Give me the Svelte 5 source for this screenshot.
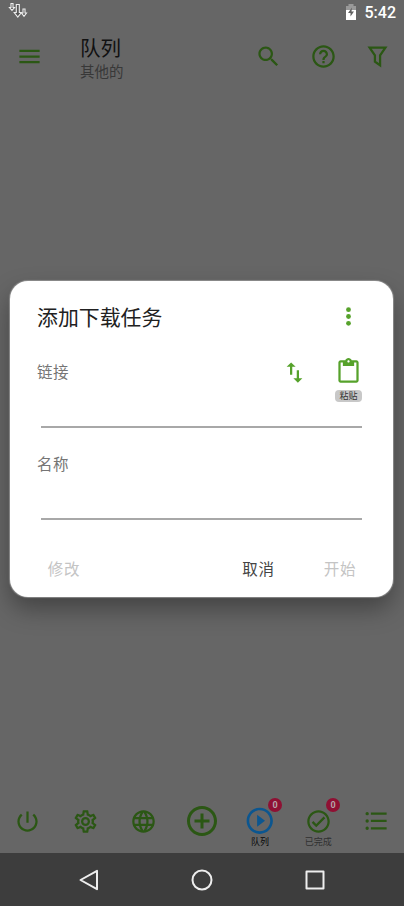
<script lang="ts">
	const cog =
		'M12,8A4,4 0 0,1 16,12A4,4 0 0,1 12,16A4,4 0 0,1 8,12A4,4 0 0,1 12,8M12,10A2,2 0 0,0 10,12A2,2 0 0,0 12,14A2,2 0 0,0 14,12A2,2 0 0,0 12,10M10,22C9.75,22 9.54,21.82 9.5,21.58L9.13,18.93C8.5,18.68 7.96,18.34 7.44,17.94L4.95,18.95C4.73,19.03 4.46,18.95 4.34,18.73L2.34,15.27C2.21,15.05 2.27,14.78 2.46,14.63L4.57,12.97L4.5,12L4.57,11L2.46,9.37C2.27,9.22 2.21,8.95 2.34,8.73L4.34,5.27C4.46,5.05 4.73,4.96 4.95,5.05L7.44,6.05C7.96,5.66 8.5,5.32 9.13,5.07L9.5,2.42C9.54,2.18 9.75,2 10,2H14C14.25,2 14.46,2.18 14.5,2.42L14.87,5.07C15.5,5.32 16.04,5.66 16.56,6.05L19.05,5.05C19.27,4.96 19.54,5.05 19.66,5.27L21.66,8.73C21.79,8.95 21.73,9.22 21.54,9.37L19.43,11L19.5,12L19.43,13L21.54,14.63C21.73,14.78 21.79,15.05 21.66,15.27L19.66,18.73C19.54,18.95 19.27,19.04 19.05,18.95L16.56,17.95C16.04,18.34 15.5,18.68 14.87,18.93L14.5,21.58C14.46,21.82 14.25,22 14,22H10M11.25,4L10.88,6.61C9.68,6.86 8.62,7.5 7.85,8.39L5.44,7.35L4.69,8.65L6.8,10.2C6.4,11.37 6.4,12.64 6.8,13.8L4.68,15.36L5.43,16.66L7.86,15.62C8.63,16.5 9.68,17.14 10.87,17.38L11.24,20H12.76L13.13,17.39C14.32,17.14 15.37,16.5 16.14,15.62L18.57,16.66L19.32,15.36L17.2,13.81C17.6,12.64 17.6,11.37 17.2,10.2L19.31,8.65L18.56,7.35L16.15,8.39C15.38,7.5 14.32,6.86 13.12,6.62L12.75,4H11.25Z'
	const power =
		'M13 3h-2v10h2V3zm4.83 2.17l-1.42 1.42C17.99 7.86 19 9.81 19 12c0 3.87-3.13 7-7 7s-7-3.13-7-7c0-2.19 1.01-4.14 2.58-5.42L6.17 5.17C4.23 6.82 3 9.26 3 12c0 4.97 4.03 9 9 9s9-4.03 9-9c0-2.74-1.23-5.18-3.17-6.83z'
	const globe =
		'M11.99 2C6.47 2 2 6.48 2 12s4.47 10 9.99 10C17.52 22 22 17.52 22 12S17.52 2 11.99 2zm6.93 6h-2.95c-.32-1.25-.78-2.45-1.38-3.56 1.84.63 3.37 1.91 4.33 3.56zM12 4.04c.83 1.2 1.48 2.53 1.91 3.96h-3.82c.43-1.43 1.08-2.76 1.91-3.96zM4.26 14C4.1 13.36 4 12.69 4 12s.1-1.36.26-2h3.38c-.08.66-.14 1.32-.14 2s.06 1.34.14 2H4.26zm.82 2h2.95c.32 1.25.78 2.45 1.38 3.56-1.84-.63-3.37-1.9-4.33-3.56zm2.95-8H5.08c.96-1.66 2.49-2.93 4.33-3.56C8.81 5.55 8.35 6.75 8.03 8zM12 19.96c-.83-1.2-1.48-2.53-1.91-3.96h3.82c-.43 1.43-1.08 2.76-1.91 3.96zM14.34 14H9.66c-.09-.66-.16-1.32-.16-2s.07-1.35.16-2h4.68c.09.65.16 1.32.16 2s-.07 1.34-.16 2zm.25 5.56c.6-1.11 1.06-2.31 1.38-3.56h2.95c-.96 1.65-2.49 2.93-4.33 3.56zM16.36 14c.08-.66.14-1.32.14-2s-.06-1.34-.14-2h3.38c.16.64.26 1.31.26 2s-.1 1.36-.26 2h-3.38z'

	const plus =
		'M13 7h-2v4H7v2h4v4h2v-4h4v-2h-4V7zm-1-5C6.48 2 2 6.48 2 12s4.48 10 10 10 10-4.48 10-10S17.52 2 12 2zm0 18c-4.41 0-8-3.59-8-8s3.59-8 8-8 8 3.59 8 8-3.59 8-8 8z'
	const play =
		'M10 16.5l6-4.5-6-4.5v9zM12 2C6.48 2 2 6.48 2 12s4.48 10 10 10 10-4.48 10-10S17.52 2 12 2zm0 18c-4.41 0-8-3.59-8-8s3.59-8 8-8 8 3.59 8 8-3.59 8-8 8z'
	const check =
		'M12 2C6.5 2 2 6.5 2 12S6.5 22 12 22 22 17.5 22 12 17.5 2 12 2M12 20C7.59 20 4 16.41 4 12S7.59 4 12 4 20 7.59 20 12 16.41 20 12 20M16.59 7.58L10 14.17L7.41 11.59L6 13L10 17L18 9L16.59 7.58Z'
	const list =
		'M2.2 5a1.5 1.5 0 1 0 3 0a1.5 1.5 0 1 0-3 0M7 4v2h14V4zM2.2 11.500a1.5 1.5 0 1 0 3 0a1.5 1.5 0 1 0-3 0M7 10.500v2h14v-2zM2.2 18a1.5 1.5 0 1 0 3 0a1.5 1.5 0 1 0-3 0M7 17v2h14v-2z'

	const tabs = [
		{ name: 'power', d: power, size: 27 },
		{ name: 'settings', d: cog, size: 27 },
		{ name: 'browser', d: globe, size: 27 },
		{ name: 'add', d: plus, size: 36 },
		{ name: 'queue', d: play, size: 31.5, label: '队列', badge: 0, active: true },
		{ name: 'done', d: check, size: 27, label: '已完成', badge: 0 },
		{ name: 'list', d: list, size: 27 }
	]

	let link = $state('')
	let fileName = $state('')
</script>

<div class="screen">
	<div class="statusbar">
		<svg class="downloads" width="20" height="18" viewBox="0 0 20 18">
			<path d="M3 1.5h2v4h1.5L4 8.3 1.5 5.5H3z" />
			<path d="M8.3 2.500h3v8h2.100L9.8 15.200 6.200 10.500h2.100z" />
			<path d="M15 7h2v4h1.500L16 14.300 13.500 11H15z" />
		</svg>
		<div class="status-right">
			<svg width="12" height="18" viewBox="0 0 12 18">
				<path d="M3.500 1h5v2H11v5H1V3h2.500z" fill="#999" />
				<path d="M1 7h10v10H1z" fill="#fff" />
				<path d="M7 4.500L3 10h2.500v3.500L9 8.500H6.500z" fill="#606060" />
			</svg>
			<span class="clock">5:42</span>
		</div>
	</div>

	<header>
		<svg class="menu" width="27" height="27" viewBox="0 0 24 24">
			<path d="M3 18h18v-2H3v2zm0-5h18v-2H3v2zm0-7v2h18V6H3z" />
		</svg>
		<div class="titles">
			<div class="title">队列</div>
			<div class="subtitle">其他的</div>
		</div>
		<div class="actions">
			<svg width="27" height="27" viewBox="0 0 24 24">
				<path
					d="M15.5 14h-.79l-.28-.27C15.41 12.59 16 11.11 16 9.5 16 5.91 13.09 3 9.5 3S3 5.91 3 9.5 5.91 16 9.5 16c1.61 0 3.09-.59 4.23-1.57l.27.28v.79l5 4.99L20.49 19l-4.99-5zm-6 0C7.01 14 5 11.99 5 9.5S7.01 5 9.5 5 14 7.01 14 9.5 11.99 14 9.5 14z"
				/>
			</svg>
			<svg width="27" height="27" viewBox="0 0 24 24">
				<path
					d="M11 18h2v-2h-2v2zm1-16C6.48 2 2 6.48 2 12s4.48 10 10 10 10-4.48 10-10S17.52 2 12 2zm0 18c-4.41 0-8-3.59-8-8s3.59-8 8-8 8 3.59 8 8-3.59 8-8 8zm0-14c-2.21 0-4 1.79-4 4h2c0-1.1.9-2 2-2s2 .9 2 2c0 2-3 1.75-3 5h2c0-2.25 3-2.5 3-5 0-2.21-1.79-4-4-4z"
				/>
			</svg>
			<svg width="27" height="27" viewBox="0 0 24 24">
				<path class="funnel" d="M5 4.200h14l-4.700 6.700v8.900L9.700 16.500v-5.600z" />
			</svg>
		</div>
	</header>

	<main>
		<div class="dialog" role="dialog" aria-label="添加下载任务">
			<div class="dialog-head">
				<h2>添加下载任务</h2>
				<svg width="27" height="27" viewBox="0 0 27 27">
					<circle cx="13.5" cy="6.7" r="2.4" />
					<circle cx="13.5" cy="13.5" r="2.4" />
					<circle cx="13.5" cy="20.3" r="2.4" />
				</svg>
			</div>

			<div class="field link">
				<div class="field-row">
					<label for="link">链接</label>
					<svg class="swap" width="27" height="27" viewBox="0 0 24 24">
						<path d="M9 3L5 6.99h3V14h2V6.99h3L9 3zm7 14.01V10h-2v7.01h-3L15 21l4-3.99h-3z" />
					</svg>
					<button class="paste" type="button">
						<svg width="27" height="27" viewBox="0 0 24 24">
							<path
								d="M19 2h-4.18C14.4.84 13.3 0 12 0c-1.3 0-2.4.84-2.82 2H5c-1.1 0-2 .9-2 2v16c0 1.1.9 2 2 2h14c1.1 0 2-.9 2-2V4c0-1.1-.9-2-2-2zm-7 0c.55 0 1 .45 1 1s-.45 1-1 1-1-.45-1-1 .45-1 1-1zm7 18H5V4h2v3h10V4h2v16z"
							/>
						</svg>
						<span>粘贴</span>
					</button>
				</div>
				<input id="link" bind:value={link} />
			</div>

			<div class="field name">
				<label for="name">名称</label>
				<input id="name" bind:value={fileName} />
			</div>

			<div class="buttons">
				<button type="button" disabled>修改</button>
				<button type="button" class="cancel">取消</button>
				<button type="button" disabled>开始</button>
			</div>
		</div>
	</main>

	<div class="tabs">
		{#each tabs as tab (tab.name)}
			<div class="tab" class:active={tab.active}>
				<div class="tab-icon">
					<svg width={tab.size} height={tab.size} viewBox="0 0 24 24">
						<path d={tab.d} />
					</svg>
					{#if tab.badge !== undefined}
						<span class="badge">{tab.badge}</span>
					{/if}
				</div>
				{#if tab.label}
					<span class="tab-label">{tab.label}</span>
				{/if}
			</div>
		{/each}
	</div>

	<nav>
		<svg width="26" height="26" viewBox="0 0 26 26"><path d="M21 3.8v18.4L4.5 13z" /></svg>
		<svg width="26" height="26" viewBox="0 0 26 26"><circle cx="13" cy="13" r="9.500" /></svg>
		<svg width="26" height="26" viewBox="0 0 26 26"><path d="M4.5 4.5h17v17h-17z" /></svg>
	</nav>
</div>

<style>
	:global(body) {
		margin: 0;
	}

	.screen {
		display: flex;
		flex-direction: column;
		width: 404px;
		height: 906px;
		overflow: hidden;
		background: #666;
		font-family: Roboto, 'Noto Sans CJK SC', sans-serif;
	}

	svg {
		display: block;
		flex: none;
		fill: #2b5714;
	}

	.statusbar {
		display: flex;
		justify-content: space-between;
		height: 25px;
		padding: 2px 8px 0 8px;
		box-sizing: border-box;
	}

	.downloads {
		fill: #555;
		stroke: #eee;
		stroke-width: 1.1;
	}

	.status-right {
		display: flex;
		align-items: center;
		gap: 8px;
		height: 20px;
	}

	.clock {
		color: #fff;
		font-size: 16px;
		font-weight: 500;
		line-height: 21px;
	}

	header {
		display: flex;
		align-items: center;
		height: 63px;
		padding: 0 13px 0 16px;
	}

	.titles {
		margin-left: 37px;
		padding-top: 6px;
		flex: 1;
	}

	.title {
		color: #111;
		font-size: 20.5px;
		line-height: 26px;
	}

	.subtitle {
		color: #383838;
		font-size: 14.5px;
		line-height: 22px;
	}

	.actions {
		display: flex;
		gap: 27.5px;
	}

	.funnel {
		fill: none;
		stroke: #2b5714;
		stroke-width: 2;
	}

	main {
		flex: 1;
		padding: 192.500px 11px 0 10px;
	}

	.dialog {
		height: 316.5px;
		box-sizing: border-box;
		padding: 0 31px 0 27px;
		border-radius: 18px;
		background: #fff;
		box-shadow:
			0 0 1px 1px rgba(160, 160, 160, 0.7),
			0 12px 24px rgba(0, 0, 0, 0.34);
	}

	.dialog svg {
		fill: #56a22b;
	}

	.dialog-head {
		display: flex;
		align-items: center;
		justify-content: space-between;
		height: 71px;
	}

	h2 {
		margin: -1px 0 0;
		color: #212121;
		font-size: 20.9px;
		font-weight: 400;
	}

	label {
		color: #757575;
		font-size: 15.5px;
		letter-spacing: 0.5px;
		line-height: 24px;
	}

	.field {
		display: flex;
		flex-direction: column;
		justify-content: space-between;
	}

	.link {
		height: 76px;
	}

	.field-row {
		display: flex;
		align-items: flex-start;
		height: 48px;
	}

	.field-row label {
		flex: 1;
		margin-top: 9px;
	}

	.swap {
		margin-top: 7px;
	}

	.paste {
		display: flex;
		flex-direction: column;
		align-items: center;
		gap: 5px;
		margin: 6.5px 0 0 27px;
		padding: 0;
		border: 0;
		background: none;
		font-family: inherit;
	}

	.paste span {
		width: 27px;
		height: 12px;
		border-radius: 4px;
		background: #c8c8c8;
		color: #333;
		font-size: 9px;
		line-height: 12px;
	}

	input {
		height: 24px;
		margin-left: 4px;
		padding: 0;
		border: 0;
		border-bottom: 2px solid #a8a8a8;
		background: none;
		outline: none;
	}

	.name {
		height: 67px;
		margin-top: 25px;
	}

	.buttons {
		display: flex;
		align-items: center;
		height: 32px;
		margin: 32px -5px 0 0;
	}

	.buttons button {
		width: 54px;
		padding: 0;
		border: 0;
		background: none;
		color: #c4c4c4;
		font-family: inherit;
		font-size: 15.5px;
		letter-spacing: 0.8px;
	}

	.buttons .cancel {
		margin: 0 27.5px 0 auto;
		color: #444;
	}

	.tabs {
		display: grid;
		grid-template-columns: repeat(7, 58.1px);
		justify-content: center;
		height: 58px;
		flex: none;
	}

	.tab {
		display: flex;
		flex-direction: column;
		align-items: center;
	}

	.tab-icon {
		position: relative;
		display: flex;
		align-items: center;
		justify-content: center;
		width: 40px;
		height: 40px;
		margin-top: 6px;
	}

	.tab.active svg {
		fill: #0b5690;
	}

	.badge {
		position: absolute;
		top: -3px;
		left: 28px;
		width: 14px;
		height: 14px;
		border-radius: 50%;
		background: #8f1033;
		color: #b4a4a8;
		font-size: 9px;
		font-weight: 700;
		line-height: 14px;
		text-align: center;
	}

	.tab-label {
		margin-top: -5px;
		color: #303030;
		font-size: 9px;
		line-height: 13px;
	}

	.tab.active .tab-label {
		color: #080808;
	}

	nav {
		display: flex;
		justify-content: center;
		gap: 87px;
		height: 53px;
		padding: 14px 1px 0 0;
		box-sizing: border-box;
		flex: none;
		background: #3d3d3d;
	}

	nav svg {
		fill: none;
		stroke: #eee;
		stroke-width: 2;
		stroke-linejoin: round;
	}
</style>
